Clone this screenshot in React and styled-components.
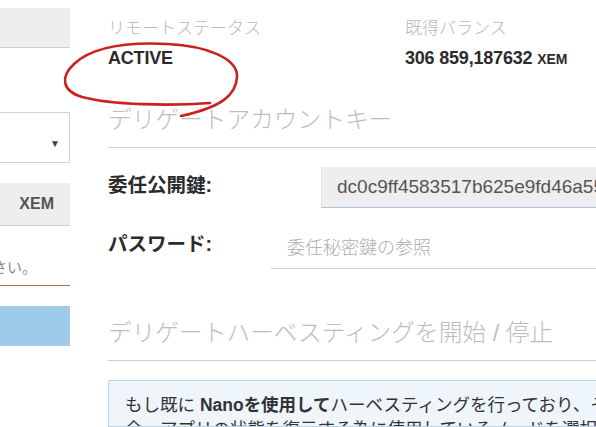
import React from "react";
import styled, { createGlobalStyle } from "styled-components";

const Global = createGlobalStyle`
  html, body { margin: 0; padding: 0; background: #fff; }
  body { font-family: "Liberation Sans", "Noto Sans CJK JP", sans-serif; }
`;

const Page = styled.div`
  position: relative;
  width: 596px;
  height: 427px;
  overflow: hidden;
  display: flex;
  background: #fff;
`;

const LeftCol = styled.div`
  flex: none;
  width: 70px;
  overflow: hidden;
  padding-top: 8px;
  display: flex;
  flex-direction: column;
`;

const GrayBox = styled.div`
  height: 39px;
  background: #eeeeee;
  border-bottom: 1px solid #c3d3e2;
`;

const SelectBox = styled.div`
  margin-top: 64px;
  box-sizing: border-box;
  height: 51px;
  border: 1px solid #cfd4d8;
  border-left: none;
  display: flex;
  align-items: center;
  justify-content: flex-end;
  padding: 11px 9px 0 0;
  font-size: 10px;
  color: #444;
`;

const UnitBox = styled.div`
  margin-top: 20px;
  height: 42px;
  background: #eeeeee;
  border-bottom: 1px solid #bccfe0;
  display: flex;
  align-items: center;
  justify-content: flex-end;
  padding-right: 16px;
  font-size: 16px;
  font-weight: 700;
  color: #555;
`;

const Hint = styled.div`
  margin-top: 30px;
  height: 24px;
  line-height: 24px;
  padding-bottom: 5px;
  border-bottom: 1px solid #b8695c;
  display: flex;
  justify-content: flex-end;
  padding-right: 33px;
  font-size: 15px;
  color: #8a8a8a;
  white-space: nowrap;
`;

const SubmitButton = styled.div`
  margin-top: 20px;
  height: 40px;
  background: #9fcbeb;
`;

const RightCol = styled.div`
  flex: none;
  width: 560px;
  margin-left: 38px;
  padding-top: 19px;
  display: flex;
  flex-direction: column;
`;

const StatusGrid = styled.div`
  display: grid;
  grid-template-columns: 297px 1fr;
`;

const StatusItem = styled.div`
  display: flex;
  flex-direction: column;
`;

const StatusLabel = styled.div`
  font-size: 17px;
  line-height: 20px;
  color: #b8b8b8;
  font-weight: 300;
  white-space: nowrap;
`;

const StatusValue = styled.div`
  margin-top: 9px;
  font-size: 18px;
  line-height: 20px;
  font-weight: 700;
  color: #2b2b2b;
  letter-spacing: -0.2px;
  white-space: nowrap;
`;

const Unit = styled.span`
  font-size: 14px;
  letter-spacing: 0;
`;

const SectionTitle = styled.div`
  margin-top: ${(p) => p.$gap}px;
  font-size: 23.7px;
  line-height: 32px;
  color: #bdbdbd;
  font-weight: 300;
  padding-bottom: 11px;
  border-bottom: 1px solid #c9d1d8;
  white-space: nowrap;
`;

const FieldRow = styled.div`
  margin-top: ${(p) => p.$gap}px;
  display: flex;
  align-items: center;
`;

const FieldLabel = styled.div`
  flex: none;
  width: ${(p) => p.$w}px;
  padding-bottom: ${(p) => p.$lift}px;
  font-size: 19.5px;
  font-weight: 700;
  color: #2b2b2b;
  white-space: nowrap;
`;

const KeyField = styled.div`
  flex: 1;
  height: 40px;
  background: #eeeeee;
  border-left: 1px solid #e2e2e2;
  border-bottom: 1px solid #a9c4de;
  display: flex;
  align-items: center;
  padding-left: 15px;
  font-size: 19px;
  color: #555;
  white-space: nowrap;
  overflow: hidden;
`;

const PasswordField = styled.div`
  flex: 1;
  box-sizing: border-box;
  height: 41px;
  padding-bottom: 4px;
  border-bottom: 1px solid #c6ced6;
  display: flex;
  align-items: center;
  padding-left: 16px;
  font-size: 18px;
  color: #adadad;
  font-weight: 300;
  white-space: nowrap;
`;

const InfoBox = styled.div`
  margin-top: 19px;
  background: #eef5fb;
  border: 1px solid #bfd3e2;
  border-right: none;
  padding: 12px 0 0 16px;
  font-size: 17.5px;
  line-height: 24px;
  color: #333;
  white-space: nowrap;
  overflow: hidden;
`;

const Strong = styled.b`
  font-weight: 700;
`;

const Annotation = styled.svg`
  position: absolute;
  left: 0;
  top: 0;
  pointer-events: none;
`;

export default function App() {
  return (
    <>
      <Global />
      <Page>
        <LeftCol>
          <GrayBox />
          <SelectBox>▼</SelectBox>
          <UnitBox>XEM</UnitBox>
          <Hint>
            <span>ください。</span>
          </Hint>
          <SubmitButton />
        </LeftCol>
        <RightCol>
          <StatusGrid>
            <StatusItem>
              <StatusLabel>リモートステータス</StatusLabel>
              <StatusValue>ACTIVE</StatusValue>
            </StatusItem>
            <StatusItem>
              <StatusLabel>既得バランス</StatusLabel>
              <StatusValue>
                306 859,187632 <Unit>XEM</Unit>
              </StatusValue>
            </StatusItem>
          </StatusGrid>
          <SectionTitle $gap={35}>デリゲートアカウントキー</SectionTitle>
          <FieldRow $gap={19}>
            <FieldLabel $w={213} $lift={8}>委任公開鍵:</FieldLabel>
            <KeyField>dc0c9ff4583517b625e9fd46a55e3c0b7a2d</KeyField>
          </FieldRow>
          <FieldRow $gap={20}>
            <FieldLabel $w={163} $lift={12}>パスワード:</FieldLabel>
            <PasswordField>委任秘密鍵の参照</PasswordField>
          </FieldRow>
          <SectionTitle $gap={48}>デリゲートハーベスティングを開始 / 停止</SectionTitle>
          <InfoBox>
            もし既に <Strong>Nanoを使用して</Strong>ハーベスティングを行っており、その場
            <br />
            合、アプリの状態を復元する為に使用しているノードを選択してください。
          </InfoBox>
        </RightCol>
        <Annotation width="596" height="427" viewBox="0 0 596 427">
          <path
            d="M 210 103 C 170 106, 112 105, 82 97 C 62 91, 60 77, 74 64 C 92 47, 128 42, 168 44 C 206 46, 238 58, 237 77 C 236 95, 222 107, 181 116"
            fill="none"
            stroke="#cc1f1f"
            strokeWidth="2.6"
            strokeLinecap="round"
            strokeLinejoin="round"
          />
        </Annotation>
      </Page>
    </>
  );
}
